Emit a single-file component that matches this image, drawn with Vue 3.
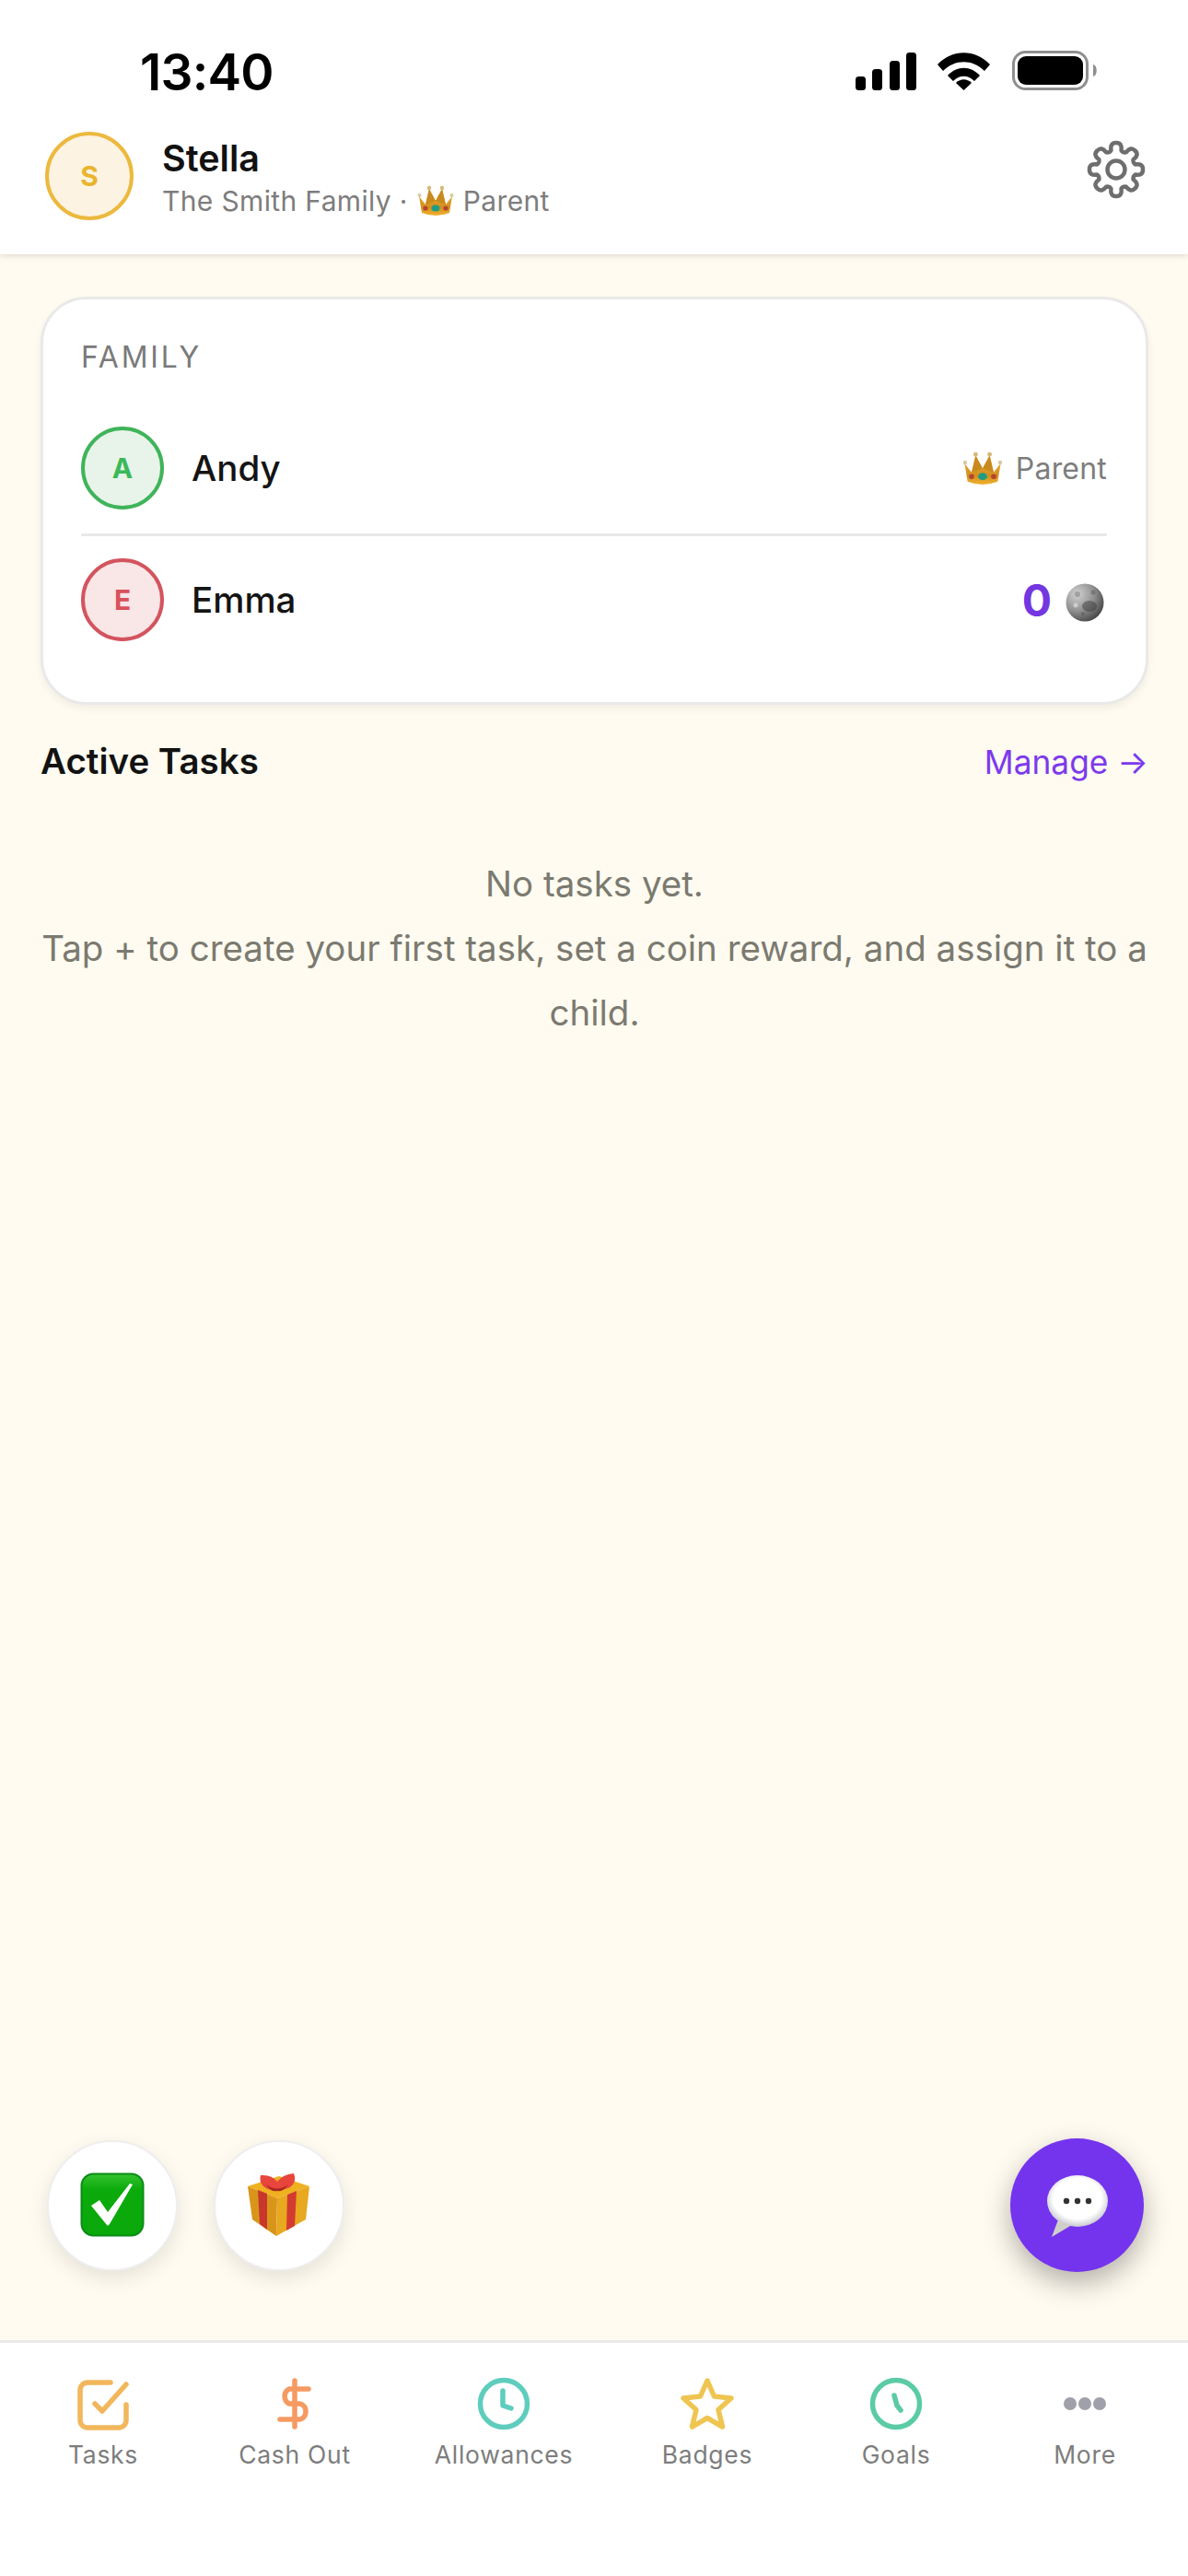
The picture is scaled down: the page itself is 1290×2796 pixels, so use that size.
<template>
  <div class="screen">
    <svg class="defs" width="0" height="0" aria-hidden="true">
      <defs>
        <linearGradient id="crownGold" x1="0" y1="0" x2="0" y2="1">
          <stop offset="0" stop-color="#e9b23a" />
          <stop offset="0.7" stop-color="#d38f1e" />
          <stop offset="1" stop-color="#f0b431" />
        </linearGradient>
        <radialGradient id="moonGrey" cx="0.3" cy="0.28" r="0.9">
          <stop offset="0" stop-color="#d2d2d2" />
          <stop offset="0.5" stop-color="#8f8f8f" />
          <stop offset="1" stop-color="#2f2f2f" />
        </radialGradient>
        <linearGradient id="checkGreen" x1="0" y1="0" x2="0" y2="1">
          <stop offset="0" stop-color="#35c22f" />
          <stop offset="0.25" stop-color="#0cab0c" />
          <stop offset="1" stop-color="#0aa80a" />
        </linearGradient>
        <radialGradient id="bubbleWhite" cx="0.5" cy="0.45" r="0.55">
          <stop offset="0.72" stop-color="#ffffff" />
          <stop offset="1" stop-color="#c9c7cf" />
        </radialGradient>
        <symbol id="crown" viewBox="0 0 40 34">
          <path d="M2 12 L9 21 L13 4 L20 17 L27 4 L31 21 L38 12 L35 30 Q20 36 5 30 Z" fill="url(#crownGold)" />
          <path d="M13 4 L9 21 L20 17 Z" fill="#c98a1d" />
          <path d="M27 4 L31 21 L20 17 Z" fill="#c98a1d" />
          <circle cx="2.500" cy="11" r="2" fill="#d8c9a0" />
          <circle cx="13" cy="3" r="2.200" fill="#d8b878" />
          <circle cx="27" cy="3" r="2.200" fill="#d8b878" />
          <circle cx="37.500" cy="11" r="2" fill="#d8c9a0" />
          <ellipse cx="20" cy="25" rx="4.500" ry="3.600" fill="#1f9d84" />
          <ellipse cx="9" cy="25" rx="2.600" ry="2.600" fill="#b5452e" />
          <ellipse cx="31" cy="25" rx="2.600" ry="2.600" fill="#b5452e" />
        </symbol>
      </defs>
    </svg>

    <div class="status-bar">
      <span class="time">13:40</span>
      <div class="status-icons">
        <svg class="signal" viewBox="0 0 66 41" width="66" height="41">
          <rect x="0" y="26" width="11" height="15" rx="3.5" />
          <rect x="18" y="18" width="11" height="23" rx="3.5" />
          <rect x="37" y="9" width="11" height="32" rx="3.5" />
          <rect x="55" y="0" width="11" height="41" rx="3.5" />
        </svg>
        <svg class="wifi" viewBox="0 0 57 41" width="57" height="41">
          <path d="M0 13 C16 -4 41 -4 57 13 L51 20 C38 7 19 7 6 20 Z" />
          <path d="M11 25 C21 14 36 14 46 25 L40 31 C33 24 24 24 17 31 Z" />
          <path d="M20 33 C25 28 32 28 37 33 L28.5 41 Z" />
        </svg>
        <svg class="battery" viewBox="0 0 97 43" width="97" height="43">
          <rect x="1.5" y="1.5" width="80" height="40" rx="13" fill="none" stroke="#8f8f8f" stroke-width="3" />
          <rect x="6" y="6" width="71" height="31" rx="9" fill="#000" />
          <path d="M88 15 C93 16 93 27 88 28 Z" fill="#8f8f8f" />
        </svg>
      </div>
    </div>

    <header class="app-header">
      <div class="avatar avatar-lg avatar-gold">S</div>
      <div class="who">
        <div class="who-name">Stella</div>
        <div class="who-sub">
          <span>The Smith Family ·</span>
          <svg class="crown-sm" width="40" height="34"><use href="#crown" /></svg>
          <span>Parent</span>
        </div>
      </div>
      <svg class="gear" viewBox="0 0 64 64" width="64" height="64">
        <path :d="gearPath" />
        <circle cx="32" cy="32" r="9.5" />
      </svg>
    </header>

    <main class="content">
      <section class="family-card">
        <div class="family-label">FAMILY</div>
        <div class="member" v-for="m in members" :key="m.name">
          <div class="avatar" :class="m.tone">{{ m.name[0] }}</div>
          <span class="member-name">{{ m.name }}</span>
          <div v-if="m.parent" class="member-role">
            <svg class="crown-md" width="44" height="37"><use href="#crown" /></svg>
            <span>Parent</span>
          </div>
          <div v-else class="member-coins">
            <span class="coin-count">{{ m.coins }}</span>
            <svg class="moon" viewBox="0 0 42 42" width="42" height="42">
              <circle cx="21" cy="21" r="20.5" fill="url(#moonGrey)" />
              <circle cx="13" cy="12" r="3" fill="#777" opacity="0.5" />
              <ellipse cx="26" cy="25" rx="8" ry="6" fill="#3a3a3a" opacity="0.5" />
              <circle cx="11" cy="24" r="2.5" fill="#eee" opacity="0.55" />
              <circle cx="30" cy="10" r="2.5" fill="#555" opacity="0.45" />
              <circle cx="19" cy="33" r="2" fill="#555" opacity="0.5" />
            </svg>
          </div>
        </div>
      </section>

      <div class="tasks-head">
        <h2>Active Tasks</h2>
        <a class="manage">Manage →</a>
      </div>

      <div class="empty">
        <p>No tasks yet.</p>
        <p>Tap + to create your first task, set a coin reward, and assign it to a child.</p>
      </div>

      <div class="quick-actions">
        <button class="round-btn">
          <svg viewBox="0 0 70 70" width="70" height="70">
            <rect x="1.5" y="1.5" width="67" height="67" rx="13" fill="url(#checkGreen)" stroke="#0b8c18" stroke-width="2" />
            <path d="M12 36 L29 57 Q30 59 32 56 L57 13 L54 12 L30 43 L21 30 Z" fill="#fff" />
          </svg>
        </button>
        <button class="round-btn">
          <svg viewBox="0 0 68 70" width="68" height="70">
            <path d="M0 15 L34 4 L67 15 L32 28 Z" fill="#efb11f" />
            <path d="M0 15 L32 28 L31 69 L5 51 Z" fill="#d9951a" />
            <path d="M32 28 L67 15 L63 51 L31 69 Z" fill="#e8a81f" />
            <path d="M11 19 L21 23 L21 62 L13 56 Z" fill="#c8362c" />
            <path d="M43 24 L53 20 L51 58 L42 63 Z" fill="#d43b30" />
            <path d="M14 3 Q26 2 32 10 Q38 2 50 1 Q54 10 46 16 Q36 21 32 18 Q24 21 17 15 Q12 10 14 3 Z" fill="#e8453c" />
            <path d="M20 13 Q32 22 44 13 Q37 22 32 20 Q26 22 20 13 Z" fill="#a92820" />
          </svg>
        </button>
      </div>

      <button class="chat-btn">
        <svg viewBox="0 0 70 70" width="70" height="70">
          <path d="M16 44 L7 68 L34 52 Z" fill="#cfcfc9" />
          <ellipse cx="35" cy="29" rx="33" ry="28" fill="url(#bubbleWhite)" />
          <circle cx="23" cy="29" r="3.2" fill="#333" />
          <circle cx="35" cy="29" r="3.2" fill="#333" />
          <circle cx="47" cy="29" r="3.2" fill="#333" />
        </svg>
      </button>
    </main>

    <nav class="tab-bar">
      <div class="tab" v-for="t in tabs" :key="t.label">
        <svg class="tab-icon" viewBox="0 0 60 60" width="60" height="60" :stroke="t.color">
          <circle v-if="t.ring" cx="30" cy="30" r="25.5" />
          <path v-for="d in t.paths" :key="d" :d="d" />
          <template v-if="t.dots">
            <circle class="dot" cx="14" cy="30" r="7" />
            <circle class="dot" cx="30" cy="30" r="7" />
            <circle class="dot" cx="46" cy="30" r="7" />
          </template>
        </svg>
        <span class="tab-label">{{ t.label }}</span>
      </div>
    </nav>
  </div>
</template>

<script setup>
const members = [
  { name: 'Andy', tone: 'avatar-green', parent: true },
  { name: 'Emma', tone: 'avatar-red', parent: false, coins: 0 }
]

const tabs = [
  { label: 'Tasks', color: '#f2b75c', paths: ['M38 7 H13 a8 8 0 0 0 -8 8 V48 a8 8 0 0 0 8 8 H47 a8 8 0 0 0 8 -8 V31', 'M21 30 L29 38 L55 9'] },
  { label: 'Cash Out', color: '#f59a62', paths: ['M30 5 V55', 'M45 14 H24 a9 9 0 0 0 0 16 H36 a9 9 0 0 1 0 17 H14'] },
  { label: 'Allowances', color: '#5fcdbd', ring: true, paths: ['M29 16 V32 L38 35'] },
  { label: 'Badges', color: '#efc552', paths: ['M30 5 L37.5 22 L56 24 L42 36.500 L46.500 55 L30 45.500 L13.500 55 L18 36.500 L4 24 L22.500 22 Z'] },
  { label: 'Goals', color: '#5bcba5', ring: true, paths: ['M28 21 L31 32 L35 37'] },
  { label: 'More', color: '#a0a0aa', dots: true, paths: [] }
]

// восемь зубьев шестерёнки
function buildGear() {
  const pt = (r, deg) => {
    const a = (deg - 90) * Math.PI / 180
    return `${(32 + r * Math.cos(a)).toFixed(2)} ${(32 + r * Math.sin(a)).toFixed(2)}`
  }
  let d = ''
  for (let i = 0; i < 8; i++) {
    const a = i * 45
    d += `${i === 0 ? 'M' : 'L'}${pt(21.5, a - 15)} Q${pt(30, a - 13)} ${pt(29, a)} Q${pt(30, a + 13)} ${pt(21.5, a + 15)} Q${pt(19.5, a + 22.5)} ${pt(21.5, a + 30)} `
  }
  return d + 'Z'
}
const gearPath = buildGear()
</script>

<style scoped>
.screen {
  position: relative;
  width: 1290px;
  height: 2796px;
  display: flex;
  flex-direction: column;
  background: #fffbf0;
  font-family: Inter, "Noto Sans", sans-serif;
  overflow: hidden;
}

.defs {
  position: absolute;
}

.status-bar {
  position: relative;
  z-index: 2;
  height: 130px;
  box-sizing: border-box;
  padding: 54px 94px 0 152px;
  display: flex;
  justify-content: space-between;
  align-items: flex-start;
  background: #fff;
}

.time {
  font-size: 55px;
  line-height: 48px;
  font-weight: 600;
  color: #000;
  letter-spacing: -0.8px;
}

.status-icons {
  display: flex;
  align-items: flex-end;
  gap: 23px;
  margin-top: 1px;
}

.signal,
.wifi {
  fill: #000;
}

.battery {
  margin-left: 1px;
}

.app-header {
  height: 146px;
  box-sizing: border-box;
  padding: 13px 46px 0 49px;
  display: flex;
  align-items: flex-start;
  background: #fff;
  box-shadow: 0 2px 6px rgba(0, 0, 0, 0.12);
  position: relative;
  z-index: 1;
}

.avatar {
  flex: none;
  width: 90px;
  height: 90px;
  box-sizing: border-box;
  border: 4px solid;
  border-radius: 50%;
  display: flex;
  align-items: center;
  justify-content: center;
  font-size: 30px;
  font-weight: 700;
}

.avatar-lg {
  width: 96px;
  height: 96px;
}

.avatar-gold {
  color: #e9b52f;
  border-color: #ecb93e;
  background: #fdf3e2;
}

.avatar-green {
  color: #3cb958;
  border-color: #3fb45a;
  background: #e8f4e9;
}

.avatar-red {
  color: #d9515c;
  border-color: #d3545e;
  background: #f9e6e6;
}

.who {
  margin-left: 31px;
  flex: 1;
}

.who-name {
  margin-top: 5px;
  font-size: 39.5px;
  line-height: 48px;
  font-weight: 600;
  color: #111;
}

.who-sub {
  display: flex;
  align-items: center;
  gap: 10px;
  margin-top: 3px;
  font-size: 30px;
  line-height: 38px;
  letter-spacing: 0.35px;
  color: #7d7d7d;
}

.gear {
  margin-top: 9px;
  fill: none;
  stroke: #6e6e6e;
  stroke-width: 4.5;
  stroke-linejoin: round;
}

.content {
  position: relative;
  flex: 1;
  box-sizing: border-box;
  padding: 46px 43px 0 44px;
}

.family-card {
  box-sizing: border-box;
  padding: 44px 42px 40px 41px;
  background: #fff;
  border: 3px solid #e9e9e9;
  border-radius: 50px;
  box-shadow: 0 4px 8px rgba(0, 0, 0, 0.06);
}

.family-label {
  margin-bottom: 30px;
  font-size: 32px;
  line-height: 38px;
  letter-spacing: 2.8px;
  color: #7a7a7a;
}

.member {
  display: flex;
  align-items: center;
  padding: 26px 0;
}

.member + .member {
  border-top: 3px solid #e8e8e8;
  padding-top: 24px;
}

.member-name {
  flex: 1;
  margin-left: 30px;
  font-size: 38.5px;
  font-weight: 500;
  color: #141414;
}

.member-role {
  display: flex;
  align-items: center;
  gap: 14px;
  font-size: 32px;
  letter-spacing: 0.2px;
  color: #7d7d7d;
}

.member-coins {
  display: flex;
  align-items: center;
  gap: 15px;
  margin-right: 3px;
}

.coin-count {
  font-size: 48px;
  font-weight: 700;
  color: #7436e0;
}

.moon {
  margin-top: 6px;
}

.tasks-head {
  display: flex;
  justify-content: space-between;
  align-items: center;
  height: 50px;
  margin-top: 36px;
}

.tasks-head h2 {
  margin: 0;
  font-size: 38.5px;
  font-weight: 600;
  color: #121212;
}

.manage {
  margin-top: 2px;
  font-size: 35.3px;
  color: #7c3aed;
}

.empty {
  margin-top: 73px;
  text-align: center;
  font-size: 38.5px;
  line-height: 70px;
  color: #7b7a70;
}

.empty p {
  margin: 0;
}

.quick-actions {
  position: absolute;
  left: 51px;
  bottom: 75px;
  display: flex;
  gap: 39px;
}

.round-btn {
  width: 142px;
  height: 142px;
  padding: 0 0 3px;
  display: flex;
  align-items: center;
  justify-content: center;
  background: #fff;
  border: 2px solid #eeeeee;
  border-radius: 50%;
  box-shadow: 0 8px 22px rgba(0, 0, 0, 0.1);
}

.chat-btn {
  position: absolute;
  right: 48px;
  bottom: 74px;
  width: 145px;
  height: 145px;
  padding: 0;
  display: flex;
  align-items: center;
  justify-content: center;
  background: #7434ee;
  border: none;
  border-radius: 50%;
  box-shadow: 0 12px 30px rgba(0, 0, 0, 0.3);
}

.chat-btn svg {
  margin-top: 3px;
}

.tab-bar {
  height: 256px;
  box-sizing: border-box;
  padding-top: 36px;
  display: grid;
  grid-template-columns: 224px 192px 262px 180px 230px 180px;
  align-items: start;
  background: #fff;
  border-top: 3px solid #e9e9e9;
}

.tab {
  display: flex;
  flex-direction: column;
  align-items: center;
}

.tab-icon {
  fill: none;
  stroke-width: 5.500;
  stroke-linecap: round;
  stroke-linejoin: round;
}

.tab-icon .dot {
  fill: #a0a0aa;
  stroke: none;
}

.tab-label {
  margin-top: 8px;
  font-size: 26.5px;
  line-height: 34px;
  letter-spacing: 0.7px;
  color: #7d7d7d;
}
</style>
